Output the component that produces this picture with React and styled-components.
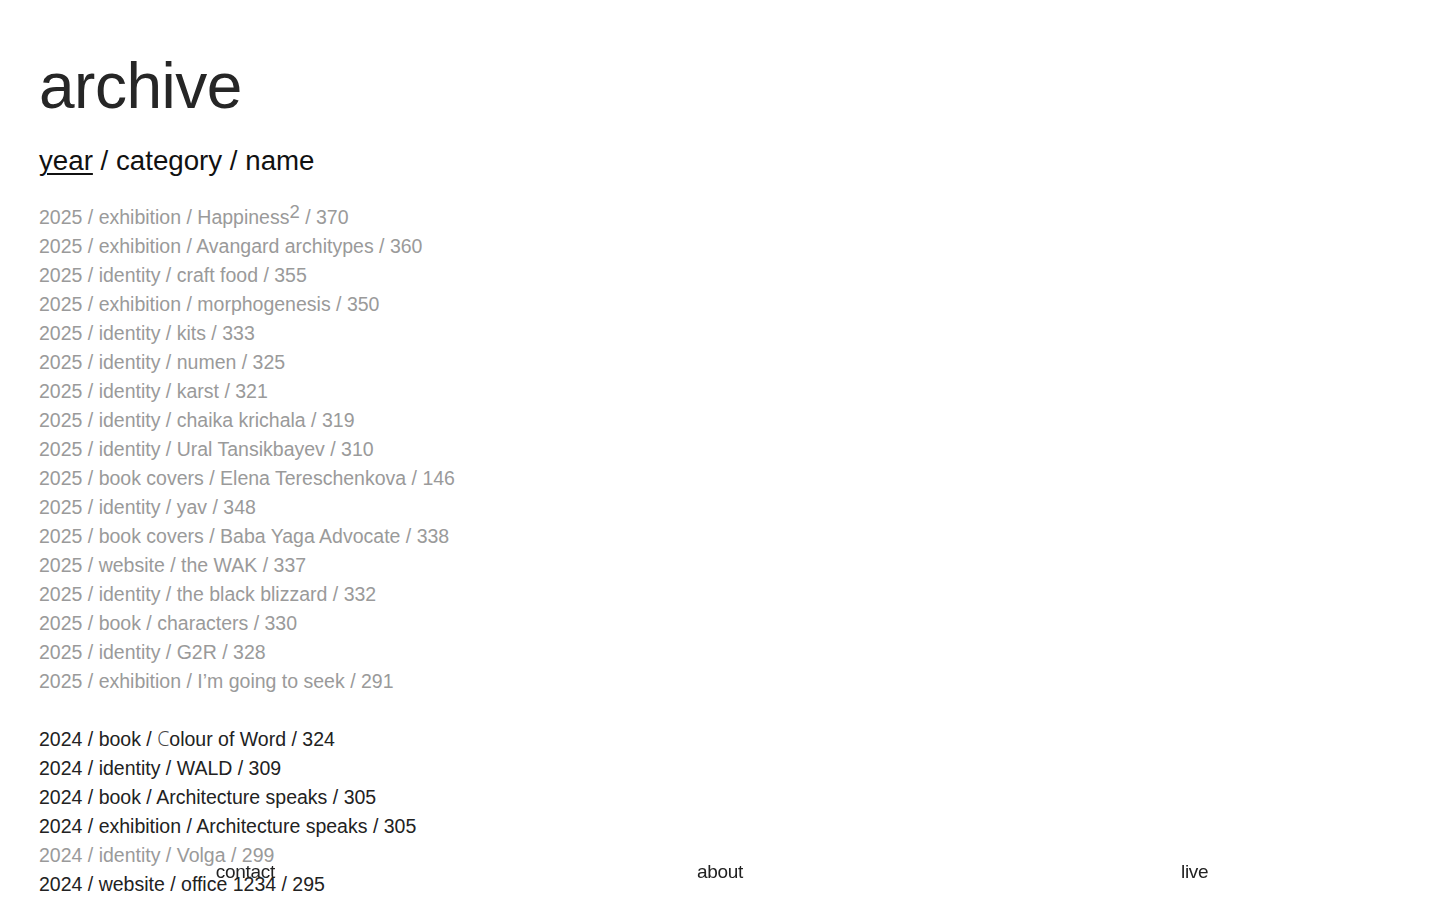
import React from 'react';
import styled, { createGlobalStyle } from 'styled-components';

const Global = createGlobalStyle`
  html, body { margin: 0; padding: 0; background: #fff; }
  body { font-family: "Liberation Sans", Arial, sans-serif; color: #222; }
`;

const Page = styled.main`
  padding: 54px 39px 0;
`;

const Title = styled.h1`
  margin: 0;
  font-size: 64px;
  line-height: 1;
  font-weight: 400;
  letter-spacing: -0.5px;
  color: #262626;
`;

const Sort = styled.div`
  margin-top: 29px;
  font-size: 27.7px;
  line-height: 1;
  color: #111;
`;

const SortLink = styled.a`
  color: #111;
  text-decoration: ${p => (p.$active ? 'underline' : 'none')};
  text-decoration-thickness: 2px;
  text-underline-offset: 3px;
  cursor: pointer;
`;

const List = styled.ul`
  list-style: none;
  margin: 28px 0 0;
  padding: 0;
`;

const Row = styled.li`
  font-size: 19.5px;
  line-height: 29px;
  color: ${p => (p.$muted ? '#9a9a9a' : '#222')};
  white-space: nowrap;
`;

const Sup = styled.sup`
  font-size: 0.95em;
  line-height: 0;
  vertical-align: 0.35em;
`;

const OddC = styled.span`
  font-family: "Open Sans", sans-serif;
  font-weight: 300;
  color: #444;
`;

const Footer = styled.nav`
  position: fixed;
  left: 0;
  right: 0;
  bottom: 0;
  display: grid;
  grid-template-columns: repeat(3, 1fr);
  padding: 0 8px 14px;
`;

const FootLink = styled.a`
  text-align: center;
  font-size: 19px;
  line-height: 29px;
  color: #222;
  letter-spacing: -0.3px;
  cursor: pointer;
`;

const y2025 = [
  ['exhibition', <>Happiness<Sup>2</Sup></>, 370],
  ['exhibition', 'Avangard architypes', 360],
  ['identity', 'craft food', 355],
  ['exhibition', 'morphogenesis', 350],
  ['identity', 'kits', 333],
  ['identity', 'numen', 325],
  ['identity', 'karst', 321],
  ['identity', 'chaika krichala', 319],
  ['identity', 'Ural Tansikbayev', 310],
  ['book covers', 'Elena Tereschenkova', 146],
  ['identity', 'yav', 348],
  ['book covers', 'Baba Yaga Advocate', 338],
  ['website', 'the WAK', 337],
  ['identity', 'the black blizzard', 332],
  ['book', 'characters', 330],
  ['identity', 'G2R', 328],
  ['exhibition', 'I’m going to seek', 291],
];

const y2024 = [
  ['book', <><OddC>С</OddC>olour of Word</>, 324, false],
  ['identity', 'WALD', 309, false],
  ['book', 'Architecture speaks', 305, false],
  ['exhibition', 'Architecture speaks', 305, false],
  ['identity', 'Volga', 299, true],
  ['website', 'office 1234', 295, false],
];

const App = () => {
  return (
    <>
      <Global />
      <Page>
        <Title>archive</Title>
        <Sort>
          <SortLink $active>year</SortLink> / <SortLink>category</SortLink> / <SortLink>name</SortLink>
        </Sort>
        <List>
          {y2025.map(([cat, name, num], i) => (
            <Row key={'a' + i} $muted>2025 / {cat} / {name} / {num}</Row>
          ))}
        </List>
        <List>
          {y2024.map(([cat, name, num, muted], i) => (
            <Row key={'b' + i} $muted={muted}>2024 / {cat} / {name} / {num}</Row>
          ))}
        </List>
      </Page>
      <Footer>
        <FootLink>contact</FootLink>
        <FootLink>about</FootLink>
        <FootLink>live</FootLink>
      </Footer>
    </>
  );
};

export default App;
